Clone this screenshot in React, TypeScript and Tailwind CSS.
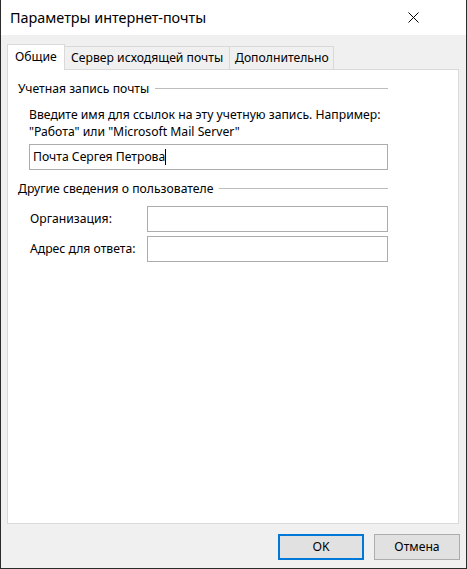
const font = { fontFamily: '"Noto Sans", "Open Sans", sans-serif' };

const Legend = ({ title }: { title: string }) => (
	<div className="flex items-center h-[16px]">
		<span className="whitespace-nowrap">{title}</span>
		<div className="flex-1 h-px bg-[#bdbdbd] ml-[6px] mt-[-2px]" />
	</div>
);

const Field = ({ label }: { label: string }) => (
	<div className="flex items-center h-[26px]">
		<span className="w-[118px] pl-[1px]">{label}</span>
		<div className="w-[241px] h-[26px] border border-[#acacac] bg-white" />
	</div>
);

const App = () => {
	return (
		<div
			className="w-[467px] h-[569px] flex flex-col border-x border-b border-[#2b2b2b] text-[12.2px] text-black bg-[#f0f0f0]"
			style={font}
		>
			<div className="h-[35px] bg-white flex items-center justify-between pl-[9px] pr-[47px] shrink-0">
				<span className="text-[14.4px]">Параметры интернет-почты</span>
				<svg width="11" height="11" viewBox="0 0 11 11">
					<path d="M0.5 0.5 L10.5 10.5 M10.5 0.5 L0.5 10.5" stroke="#000" strokeWidth="1" />
				</svg>
			</div>

			<div className="flex-1 flex flex-col pl-[6px] pt-[9px]">
				<div className="flex items-end h-[25px]">
					<div className="relative z-10 -mb-px h-[26px] w-[58px] bg-white border border-b-0 border-[#d9d9d9] flex items-center pl-[7px] pb-[1px]">
						Общие
					</div>
					<div className="h-[23px] w-[165px] border border-l-0 border-b-0 border-[#d9d9d9] flex items-center pl-[6px]">
						Сервер исходящей почты
					</div>
					<div className="h-[23px] w-[104px] border border-l-0 border-b-0 border-[#d9d9d9] flex items-center pl-[5px]">
						Дополнительно
					</div>
				</div>

				<div className="w-[452px] h-[455px] bg-white border border-[#d9d9d9] pl-[10px] pt-[11px]">
					<div className="w-[370px] flex flex-col">
						<Legend title="Учетная запись почты" />
						<div className="pl-[11px] mt-[9px] leading-[17px]">
							<p>Введите имя для ссылок на эту учетную запись. Например:</p>
							<p>"Работа" или "Microsoft Mail Server"</p>
						</div>
						<div className="ml-[11px] mt-[4px] w-[359px] h-[26px] border border-[#acacac] flex items-center pl-[3px]">
							<span>Почта Сергея Петрова</span>
							<span className="w-px h-[16px] bg-black" />
						</div>

						<div className="mt-[11px]">
							<Legend title="Другие сведения о пользователе" />
						</div>
						<div className="pl-[11px] mt-[9px] flex flex-col gap-[4px]">
							<Field label="Организация:" />
							<Field label="Адрес для ответа:" />
						</div>
					</div>
				</div>

				<div className="flex-1 flex items-start justify-end gap-[10px] pt-[10px] pr-[6px]">
					<button className="w-[86px] h-[26px] bg-[#e1e1e1] border-2 border-[#0078d7]">
						OK
					</button>
					<button className="w-[86px] h-[26px] bg-[#e1e1e1] border border-[#adadad]">
						Отмена
					</button>
				</div>
			</div>
		</div>
	);
};

export default App;
